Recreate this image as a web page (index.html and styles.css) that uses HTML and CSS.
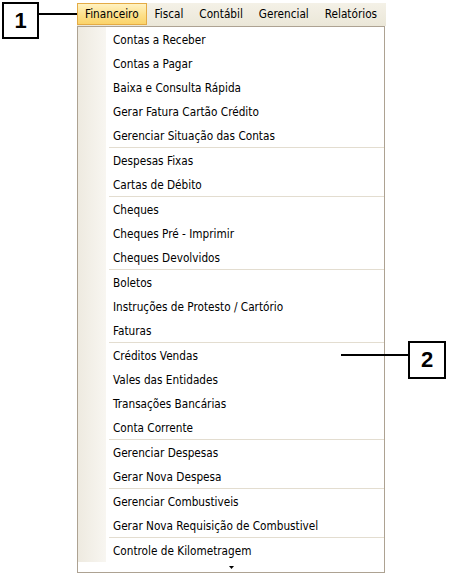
FILE: index.html
```html
<!DOCTYPE html>
<html lang="pt-BR">
<head>
<meta charset="utf-8">
<title>Menu Financeiro</title>
<link rel="stylesheet" href="styles.css">
</head>
<body>
<div class="page">
  <div class="menu">
    <nav class="bar">
      <div class="bar-item active">Financeiro</div>
      <div class="bar-item">Fiscal</div>
      <div class="bar-item">Contábil</div>
      <div class="bar-item">Gerencial</div>
      <div class="bar-item">Relatórios</div>
    </nav>
    <div class="dropdown">
      <div class="list">
        <div class="item">Contas a Receber</div>
        <div class="item">Contas a Pagar</div>
        <div class="item">Baixa e Consulta Rápida</div>
        <div class="item">Gerar Fatura Cartão Crédito</div>
        <div class="item">Gerenciar Situação das Contas</div>
        <div class="sep"></div>
        <div class="item">Despesas Fixas</div>
        <div class="item">Cartas de Débito</div>
        <div class="sep"></div>
        <div class="item">Cheques</div>
        <div class="item">Cheques Pré - Imprimir</div>
        <div class="item">Cheques Devolvidos</div>
        <div class="sep"></div>
        <div class="item">Boletos</div>
        <div class="item">Instruções de Protesto / Cartório</div>
        <div class="item">Faturas</div>
        <div class="sep"></div>
        <div class="item">Créditos Vendas</div>
        <div class="item">Vales das Entidades</div>
        <div class="item">Transações Bancárias</div>
        <div class="item">Conta Corrente</div>
        <div class="sep"></div>
        <div class="item">Gerenciar Despesas</div>
        <div class="item">Gerar Nova Despesa</div>
        <div class="sep"></div>
        <div class="item">Gerenciar Combustiveis</div>
        <div class="item">Gerar Nova Requisição de Combustivel</div>
        <div class="sep"></div>
        <div class="item">Controle de Kilometragem</div>
      </div>
      <div class="more">
        <svg width="5" height="3" viewBox="0 0 5 3"><polygon points="0,0 5,0 2.5,3" fill="#000"/></svg>
      </div>
    </div>
  </div>

  <div class="callout c1">1</div>
  <div class="lead lead1"></div>
  <div class="callout c2">2</div>
  <div class="lead lead2"></div>
</div>
</body>
</html>
```
FILE: styles.css
```css
html, body {
  margin: 0;
  background: #fff;
}

body {
  font-family: "DejaVu Sans Condensed", "Liberation Sans", sans-serif;
  font-size: 11.7px;
  color: #000;
}

.page {
  position: relative;
  width: 449px;
  height: 577px;
  box-sizing: border-box;
  padding: 3px 0 0 77px;
  overflow: hidden;
}

.menu {
  width: 309px;
}

.bar {
  display: flex;
  height: 23px;
  background: linear-gradient(#f4f1e7, #ebe7d8);
}

.bar-item {
  height: 22px;
  box-sizing: border-box;
  display: flex;
  align-items: center;
  padding: 0 7px;
  border: 1px solid transparent;
  white-space: nowrap;
}

.bar-item.active {
  background: linear-gradient(#fff2c2, #fde08a 55%, #fbd36a);
  border-color: #e4ab45;
}

.dropdown {
  width: 308px;
  box-sizing: border-box;
  border: 1px solid #ada292;
  background: #fff;
}

.list {
  background: linear-gradient(to right, #eeeae0, #f8f6f1) 0 0 / 28px 100% no-repeat, #fff;
}

.item {
  height: 24px;
  line-height: 26px;
  padding-left: 35px;
  white-space: nowrap;
  overflow: hidden;
}

.sep {
  height: 1px;
  margin-left: 31px;
  background: #e3ddd0;
}

.more {
  height: 10px;
  display: flex;
  align-items: center;
  justify-content: center;
}

.more svg {
  display: block;
}

.callout {
  position: absolute;
  box-sizing: border-box;
  border: 2px solid #000;
  background: #fff;
  display: flex;
  align-items: center;
  justify-content: center;
  font-family: "Liberation Sans", Arial, sans-serif;
  font-weight: bold;
  font-size: 22px;
  color: #000;
}

.c1 {
  left: 2px;
  top: 2px;
  width: 37px;
  height: 37px;
}

.c2 {
  left: 408px;
  top: 341px;
  width: 38px;
  height: 38px;
}

.lead {
  position: absolute;
  height: 2px;
  background: #000;
}

.lead1 {
  left: 39px;
  top: 13px;
  width: 38px;
}

.lead2 {
  left: 341px;
  top: 354px;
  width: 67px;
}
```
